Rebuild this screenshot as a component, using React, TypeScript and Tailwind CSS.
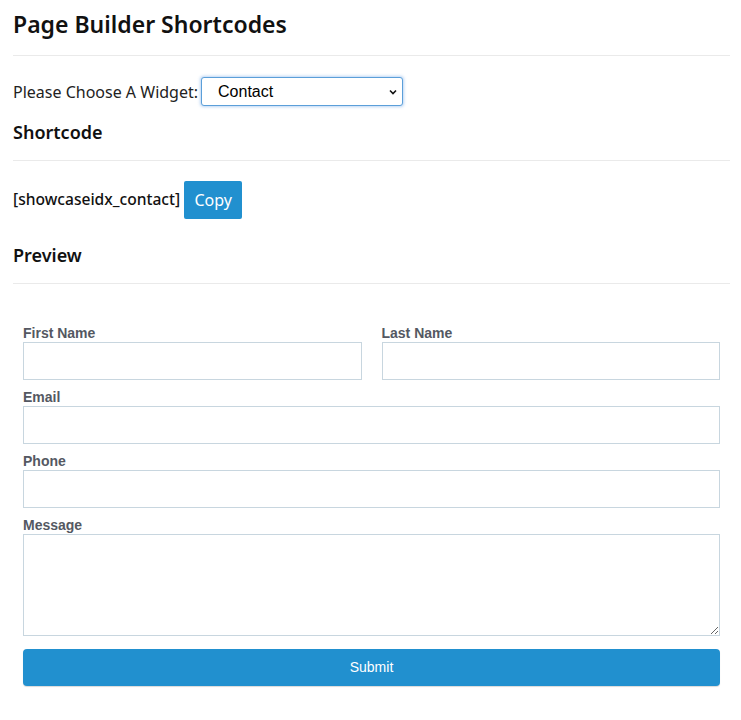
import React from "react";

const Field = ({ label, className = "" }: { label: string; className?: string }) => (
  <div className={`flex flex-col ${className}`}>
    <label className="text-[14px] font-bold leading-[16px] text-[#545862] mb-[1px]">{label}</label>
    <input className="h-[38px] w-full border border-[#c8d6df] bg-white outline-none" />
  </div>
);

export default function App() {
  return (
    <div className="bg-white min-h-[720px] pl-[13px] pr-[11px] pt-[9px] font-['Noto_Sans',sans-serif] text-[#111]">
      <h1 className="text-[23px] font-semibold leading-[30px] pb-[16px] border-b border-[#eaeaea]">
        Page Builder Shortcodes
      </h1>

      <div className="flex items-center mt-[21px] h-[29px]">
        <span className="text-[16px] leading-[20px] text-[#222]">Please Choose A Widget:</span>
        <div className="relative ml-[3px] w-[202px] h-[29px] rounded-[3px] border border-[#5b9fd9] shadow-[0_0_3px_1px_rgba(100,160,230,0.45)] bg-white flex items-center pl-[16px]">
          <span className="text-[16px] font-['Liberation_Sans',sans-serif] text-black">Contact</span>
          <svg className="absolute right-[4px] top-[9px]" width="10" height="10" viewBox="0 0 10 10">
            <path d="M2 3.5 L5 6.5 L8 3.5" fill="none" stroke="#111" strokeWidth="1.6" />
          </svg>
        </div>
      </div>

      <h2 className="text-[18px] font-semibold leading-[24px] mt-[14px] pb-[16px] border-b border-[#eaeaea]">
        Shortcode
      </h2>

      <div className="flex items-center mt-[20px]">
        <span className="text-[15.6px] font-medium text-[#111]">[showcaseidx_contact]</span>
        <button className="ml-[4px] h-[38px] w-[58px] rounded-[2px] bg-[#2190cf] text-white text-[16px]">Copy</button>
      </div>

      <h2 className="text-[18px] font-semibold leading-[24px] mt-[24px] pb-[16px] border-b border-[#eaeaea]">
        Preview
      </h2>

      <form className="px-[10px] pt-[41px] font-['Liberation_Sans',sans-serif] flex flex-col gap-[9px]">
        <div className="grid grid-cols-2 gap-[20px]">
          <Field label="First Name" />
          <Field label="Last Name" />
        </div>
        <Field label="Email" />
        <Field label="Phone" />
        <div className="flex flex-col">
          <label className="text-[14px] font-bold leading-[16px] text-[#545862] mb-[1px]">Message</label>
          <textarea className="h-[102px] w-full border border-[#c8d6df] bg-white outline-none" />
        </div>
        <button
          type="button"
          className="mt-[4px] h-[37px] w-full rounded-[4px] bg-[#2190cf] text-white text-[14px] font-medium shadow-[0_1px_1px_rgba(0,0,0,0.15)]"
        >
          Submit
        </button>
      </form>
    </div>
  );
}
